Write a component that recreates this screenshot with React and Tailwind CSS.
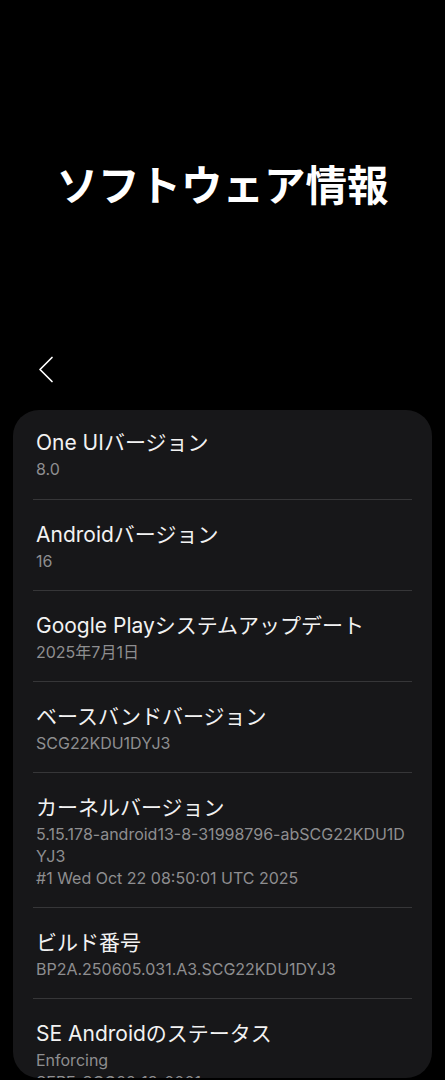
import React from "react";

const rows = [
  { t: "One UIバージョン", s: ["8.0"] },
  { t: "Androidバージョン", s: ["16"] },
  { t: "Google Playシステムアップデート", s: ["2025年7月1日"] },
  { t: "ベースバンドバージョン", s: ["SCG22KDU1DYJ3"] },
  {
    t: "カーネルバージョン",
    s: [
      "5.15.178-android13-8-31998796-abSCG22KDU1D",
      "YJ3",
      "#1 Wed Oct 22 08:50:01 UTC 2025",
    ],
  },
  { t: "ビルド番号", s: ["BP2A.250605.031.A3.SCG22KDU1DYJ3"] },
  { t: "SE Androidのステータス", s: ["Enforcing", "SEPF_SCG22_13_0001"] },
];

export default function App() {
  return (
    <div
      className="w-[445px] h-[1080px] bg-black overflow-hidden flex flex-col"
      style={{ fontFamily: '"Inter","Noto Sans CJK JP",sans-serif' }}
    >
      <div className="h-[352px] flex flex-col items-center pt-[158px]">
        <h1
          className="text-white font-bold text-[41.5px] leading-[50px]"
          style={{ fontFamily: '"Noto Sans CJK JP",sans-serif' }}
        >
          ソフトウェア情報
        </h1>
      </div>
      <div className="h-[58px] pl-[38px] pt-[4px]">
        <svg width="16" height="28" viewBox="0 0 16 28" fill="none">
          <polyline
            points="14,1.5 2,13.5 14,25.5"
            stroke="#ffffff"
            strokeWidth="1.7"
            strokeLinecap="round"
            strokeLinejoin="round"
          />
        </svg>
      </div>
      <div className="mx-[13px] h-[668px] rounded-[26px] overflow-hidden bg-[#171719] px-[20px]">
        {rows.map((r, i) => (
          <div
            key={i}
            className={
              "pl-[3px] " +
              (i === 0 ? "pt-[18px] pb-[19px]" : "pt-[20px] pb-[18px]") +
              (i < rows.length - 1 ? " border-b border-[#363638]" : "")
            }
          >
            <div className="text-[#f2f2f2] text-[21px] leading-[30px] whitespace-nowrap">
              {r.t}
            </div>
            {r.s.map((line, j) => (
              <div
                key={j}
                className="text-[#8e8e90] text-[16px] leading-[22px] whitespace-nowrap"
              >
                {line}
              </div>
            ))}
          </div>
        ))}
      </div>
    </div>
  );
}
